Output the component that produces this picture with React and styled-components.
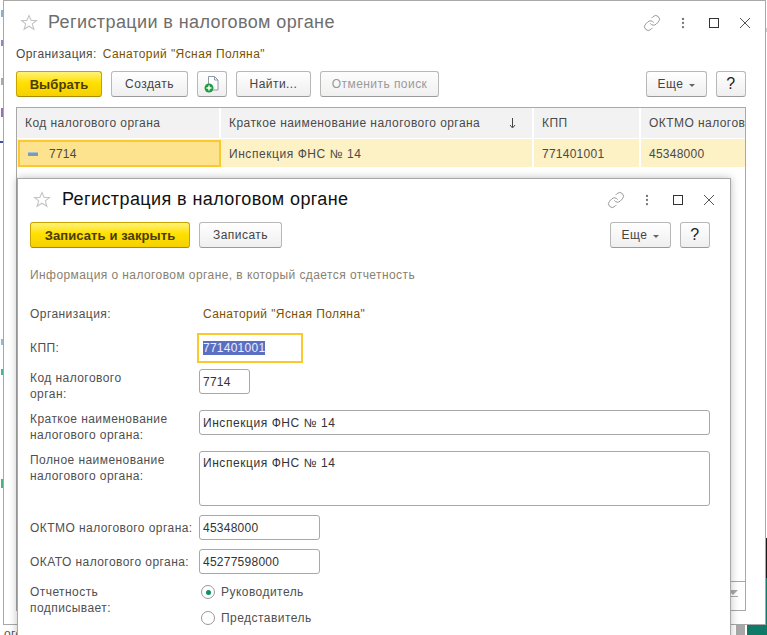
import styled, { createGlobalStyle } from "styled-components";
import { Link, MoreVertical } from "lucide-react";

const Global = createGlobalStyle`
  html, body { margin: 0; padding: 0; background: #fff; }
  body { font-family: "Liberation Sans", Arial, sans-serif; font-size: 12px; color: #4a4a4a; }
`;

const Desktop = styled.div`
  position: relative;
  width: 767px;
  height: 635px;
  overflow: hidden;
  background: #fff;
`;

const Crumb = styled.span`
  position: absolute;
  left: ${(p) => p.$x}px;
  top: ${(p) => p.$y}px;
  width: ${(p) => p.$w}px;
  height: ${(p) => p.$h}px;
  background: ${(p) => p.$c};
`;

const BackText = styled.span`
  position: absolute;
  left: 4px;
  top: 627px;
  font-size: 12px;
  letter-spacing: 0.4px;
  color: #555;
`;

const OuterWindow = styled.section`
  position: absolute;
  left: 3px;
  top: 0;
  width: 761px;
  height: 623px;
  background: #fff;
  border: 1px solid #a8a8a8;
`;

const InnerWindow = styled.section`
  position: absolute;
  left: 17px;
  top: 178px;
  width: 712px;
  height: 470px;
  background: #fff;
  border: 1px solid #a8a8a8;
  box-shadow: 0 0 8px rgba(0, 0, 0, 0.25);
`;

const TitleBar = styled.header`
  display: flex;
  align-items: center;
  height: ${(p) => p.$h}px;
  padding: ${(p) => p.$pad};
`;

const Title = styled.h1`
  margin: 0 0 0 ${(p) => p.$gap}px;
  font-size: 18px;
  font-weight: 400;
  letter-spacing: 0.4px;
  color: ${(p) => p.$color};
  flex: 1;
`;

const WinTools = styled.div`
  display: flex;
  align-items: center;
`;

const ToolSlot = styled.span`
  display: flex;
  width: 31px;
  justify-content: center;
  align-items: center;
  color: #777;
`;

const MaxBox = styled.span`
  display: block;
  width: 8px;
  height: 8px;
  border: 1px solid #333;
`;

const OrgLine = styled.div`
  display: flex;
  gap: 6px;
  height: 16px;
  align-items: center;
  margin-left: 12px;
  font-size: 12px;
  letter-spacing: 0.42px;
`;

const Brown = styled.span`
  color: #7a5200;
`;

const Toolbar = styled.div`
  display: flex;
  align-items: stretch;
  height: 26px;
  margin: ${(p) => p.$m};
`;

const Btn = styled.button`
  box-sizing: border-box;
  width: ${(p) => p.$w}px;
  height: 26px;
  margin-right: ${(p) => p.$gap}px;
  padding: 0;
  display: flex;
  align-items: center;
  justify-content: center;
  gap: 6px;
  border: 1px solid ${(p) => (p.$primary ? "#c9a400" : "#b8b8b8")};
  border-bottom-color: ${(p) => (p.$primary ? "#a98a00" : "#9a9a9a")};
  border-radius: 3px;
  background: ${(p) =>
    p.$primary
      ? "linear-gradient(#fff27a 0%, #ffe000 45%, #f5d000 100%)"
      : p.$off
        ? "linear-gradient(#fdfdfd, #f0f0f0)"
        : "linear-gradient(#ffffff, #efefef)"};
  color: ${(p) => (p.$primary ? "#4a3c00" : p.$off ? "#9a9a9a" : p.$big ? "#222" : "#444")};
  font-family: inherit;
  font-size: ${(p) => (p.$big ? 16 : p.$primary ? 13 : 12)}px;
  font-weight: ${(p) => (p.$primary ? 700 : 400)};
  letter-spacing: ${(p) => (p.$primary ? 0.1 : 0.45)}px;
`;

const Spacer = styled.span`
  flex: 1;
`;

const Caret = styled.i`
  width: 0;
  height: 0;
  margin-top: 2px;
  border-left: 3px solid transparent;
  border-right: 3px solid transparent;
  border-top: 3px solid #666;
`;

const Table = styled.div`
  box-sizing: border-box;
  width: 730px;
  height: 504px;
  margin: 10px 0 0 12px;
  border: 1px solid #a8a8a8;
  display: flex;
  flex-direction: column;
  overflow: hidden;
`;

const TableRow = styled.div`
  display: grid;
  grid-template-columns: 204px 313px 107px 1fr;
  height: ${(p) => p.$h}px;
  flex: none;
  border-bottom: 1px solid #fff;
  background: ${(p) => p.$bg};
`;

const Cell = styled.div`
  display: flex;
  align-items: center;
  justify-content: space-between;
  padding-left: 8px;
  padding-right: 16px;
  padding-top: ${(p) => (p.$low ? 2 : 0)}px;
  white-space: nowrap;
  overflow: hidden;
  border-right: 2px solid #fff;
  font-size: 12px;
  letter-spacing: ${(p) => (p.$num ? 0.25 : p.$wide ? 0.56 : 0.44)}px;
  &:last-child { border-right: 0; padding-right: 0; }
`;

const CurrentCell = styled(Cell)`
  justify-content: flex-start;
  gap: 11px;
  margin: 1px 0 0 1px;
  padding-left: 8px;
  padding-top: 0;
  background: #fee38e;
  border: 2px solid #fbc82e;
`;

const MinusMark = styled.span`
  display: block;
  width: 10px;
  height: 4px;
  background: #7b9cb4;
  border-top: 1px solid #a9bfd0;
  box-sizing: border-box;
`;

const TableBody = styled.div`
  flex: 1;
`;

const TableFoot = styled.div`
  flex: none;
  height: 20px;
  border-top: 1px solid #a8a8a8;
  display: flex;
  justify-content: flex-end;
  padding-right: 7px;
  padding-top: 8px;
`;

const ScrollDown = styled.span`
  display: block;
  height: 6px;
  border-bottom: 1px solid #aaa;
  &::before {
    content: "";
    display: block;
    width: 0;
    height: 0;
    border-left: 5px solid transparent;
    border-right: 5px solid transparent;
    border-top: 5px solid #aaa;
  }
`;

const Hint = styled.p`
  margin: 19px 0 0 12px;
  height: 16px;
  line-height: 16px;
  font-size: 12px;
  color: #8a7f70;
  letter-spacing: 0.42px;
`;

const Form = styled.div`
  display: flex;
  flex-direction: column;
  margin-top: 19px;
  padding-left: 12px;
`;

const FormRow = styled.div`
  display: grid;
  grid-template-columns: 169px 1fr;
  align-items: ${(p) => (p.$top ? "start" : "center")};
  height: ${(p) => p.$h}px;
  margin-top: ${(p) => p.$mt || 0}px;
`;

const Label = styled.label`
  margin-top: ${(p) => (p.$down ? 1 : 0)}px;
  font-size: 12px;
  line-height: 16px;
  letter-spacing: 0.44px;
  color: #4f4f4f;
  white-space: pre-line;
`;

const Plain = styled(Brown)`
  margin-left: 4px;
  font-size: 12px;
  letter-spacing: 0.42px;
`;

const Input = styled.div`
  box-sizing: border-box;
  width: ${(p) => p.$w}px;
  height: ${(p) => p.$h || 25}px;
  padding: ${(p) => (p.$tall ? "4px" : "0")} 3px 0;
  display: flex;
  align-items: ${(p) => (p.$tall ? "flex-start" : "center")};
  border: 1px solid #a8a8a8;
  border-radius: 3px;
  font-size: 12px;
  letter-spacing: ${(p) => (p.$wide ? 0.56 : 0.25)}px;
  color: #333;
`;

const FocusInput = styled(Input)`
  margin-left: -2px;
  padding-left: 4px;
  border: 2px solid #fbc82e;
  border-radius: 0;
`;

const Selected = styled.span`
  background: #5a6fc2;
  color: #eef;
`;

const RadioList = styled.div`
  display: flex;
  flex-direction: column;
  gap: 10px;
  margin: 1px 0 0 2px;
`;

const RadioItem = styled.div`
  display: flex;
  align-items: center;
  gap: 6px;
  height: 16px;
  font-size: 12px;
  letter-spacing: 0.46px;
  color: #4f4f4f;
`;

const RadioDot = styled.span`
  box-sizing: border-box;
  width: 14px;
  height: 14px;
  border: 1px solid #999;
  border-radius: 50%;
  display: flex;
  align-items: center;
  justify-content: center;
  &::after {
    content: "";
    width: 5px;
    height: 5px;
    border-radius: 50%;
    background: ${(p) => (p.$on ? "#109060" : "transparent")};
  }
`;

const Star = () => (
  <svg width="18" height="17" viewBox="0 0 18 17" fill="none">
    <path
      d="M9 1.5l2.2 5h5.3l-4.2 3.4 1.6 5.4L9 12.2l-4.9 3.1 1.6-5.4L1.5 6.500h5.300z"
      stroke="#c4c4c4"
      strokeWidth="1.1"
    />
  </svg>
);

const Close = () => (
  <svg width="12" height="12" viewBox="0 0 12 12" fill="none">
    <path d="M1 1l10 10M11 1L1 11" stroke="#555" strokeWidth="1" />
  </svg>
);

const SortDown = () => (
  <svg width="7" height="11" viewBox="0 0 7 11" fill="none">
    <path d="M3.500 0v9M1 7l2.500 3L6 7" stroke="#444" strokeWidth="1" />
  </svg>
);

const DocPlus = () => (
  <svg width="16" height="18" viewBox="0 0 16 18" fill="none">
    <path d="M4.500 1.500h6l3.500 3.500v10H4.500z" fill="#fff" stroke="#8d99a6" />
    <path d="M10.500 1.500V5H14" stroke="#8d99a6" />
    <circle cx="5" cy="13" r="4.500" fill="#1f9d3f" />
    <path d="M5 10.500v5M2.500 13h5" stroke="#fff" strokeWidth="1.400" />
  </svg>
);

const WindowTools = () => (
  <WinTools>
    <ToolSlot>
      <Link size={18} strokeWidth={1} />
    </ToolSlot>
    <ToolSlot>
      <MoreVertical size={14} strokeWidth={2} />
    </ToolSlot>
    <ToolSlot>
      <MaxBox />
    </ToolSlot>
    <ToolSlot>
      <Close />
    </ToolSlot>
  </WinTools>
);

// bits of the window behind that stick out round the edges
const crumbs = [
  [1, 10, 2, 7, "#8db0c8"],
  [1, 40, 2, 6, "#8a8ac0"],
  [1, 78, 2, 7, "#aaa"],
  [1, 108, 2, 9, "#9a70b0"],
  [0, 141, 3, 2, "#44509a"],
  [1, 339, 2, 6, "#90bcd0"],
  [1, 369, 2, 6, "#50b0a0"],
  [1, 479, 2, 9, "#50b080"],
  [765, 28, 2, 4, "#ccc"],
  [765, 538, 2, 40, "#1a1a1a"],
  [765, 578, 2, 47, "#0f7a68"],
  [736, 625, 9, 10, "#a8a8a8"],
  [747, 625, 20, 10, "#0f7a68"],
];

export default function App() {
  return (
    <Desktop>
      <Global />
      {crumbs.map(([x, y, w, h, c]) => (
        <Crumb key={`${x}-${y}`} $x={x} $y={y} $w={w} $h={h} $c={c} />
      ))}
      <BackText>ого</BackText>

      <OuterWindow>
        <TitleBar $h={43} $pad="0 5px 2px 16px">
          <Star />
          <Title $gap={10} $color="#6e6e6e">Регистрации в налоговом органе</Title>
          <WindowTools />
        </TitleBar>
        <OrgLine>
          <span>Организация:</span>
          <Brown>Санаторий "Ясная Поляна"</Brown>
        </OrgLine>
        <Toolbar $m="9px 19px 0 12px">
          <Btn $primary $w={86} $gap={9}>Выбрать</Btn>
          <Btn $w={77} $gap={9}>Создать</Btn>
          <Btn $w={30} $gap={9}><DocPlus /></Btn>
          <Btn $w={75} $gap={9}>Найти...</Btn>
          <Btn $off $w={119} $gap={0}>Отменить поиск</Btn>
          <Spacer />
          <Btn $w={61} $gap={9}>Еще <Caret /></Btn>
          <Btn $big $w={30} $gap={0}>?</Btn>
        </Toolbar>
        <Table>
          <TableRow $h={30} $bg="#f2f2f2">
            <Cell>Код налогового органа</Cell>
            <Cell>Краткое наименование налогового органа <SortDown /></Cell>
            <Cell>КПП</Cell>
            <Cell>ОКТМО налогового органа</Cell>
          </TableRow>
          <TableRow $h={28} $bg="#fdf1c6">
            <CurrentCell $num><MinusMark />7714</CurrentCell>
            <Cell $wide $low>Инспекция ФНС № 14</Cell>
            <Cell $num $low>771401001</Cell>
            <Cell $num $low>45348000</Cell>
          </TableRow>
          <TableBody />
          <TableFoot><ScrollDown /></TableFoot>
        </Table>
      </OuterWindow>

      <InnerWindow>
        <TitleBar $h={41} $pad="0 6px 0 15px">
          <Star />
          <Title $gap={11} $color="#111">Регистрация в налоговом органе</Title>
          <WindowTools />
        </TitleBar>
        <Toolbar $m="2px 20px 0 12px">
          <Btn $primary $w={160} $gap={9}>Записать и закрыть</Btn>
          <Btn $w={83} $gap={0}>Записать</Btn>
          <Spacer />
          <Btn $w={61} $gap={9}>Еще <Caret /></Btn>
          <Btn $big $w={30} $gap={0}>?</Btn>
        </Toolbar>
        <Hint>Информация о налоговом органе, в который сдается отчетность</Hint>
        <Form>
          <FormRow $h={24}>
            <Label>Организация:</Label>
            <Plain>Санаторий "Ясная Поляна"</Plain>
          </FormRow>
          <FormRow $h={30} $mt={7}>
            <Label>КПП:</Label>
            <FocusInput $w={106} $h={30}><Selected>771401001</Selected></FocusInput>
          </FormRow>
          <FormRow $h={32} $mt={6} $top>
            <Label $down>{"Код налогового\nорган:"}</Label>
            <Input $w={51}>7714</Input>
          </FormRow>
          <FormRow $h={32} $mt={9} $top>
            <Label $down>{"Краткое наименование\nналогового органа:"}</Label>
            <Input $w={511} $wide>Инспекция ФНС № 14</Input>
          </FormRow>
          <FormRow $h={55} $mt={9} $top>
            <Label $down>{"Полное наименование\nналогового органа:"}</Label>
            <Input $w={511} $h={55} $tall $wide>Инспекция ФНС № 14</Input>
          </FormRow>
          <FormRow $h={25} $mt={9}>
            <Label>ОКТМО налогового органа:</Label>
            <Input $w={121}>45348000</Input>
          </FormRow>
          <FormRow $h={25} $mt={9}>
            <Label>ОКАТО налогового органа:</Label>
            <Input $w={121}>45277598000</Input>
          </FormRow>
          <FormRow $h={50} $mt={9} $top>
            <Label $down>{"Отчетность\nподписывает:"}</Label>
            <RadioList>
              <RadioItem><RadioDot $on />Руководитель</RadioItem>
              <RadioItem><RadioDot />Представитель</RadioItem>
            </RadioList>
          </FormRow>
        </Form>
      </InnerWindow>
    </Desktop>
  );
}
